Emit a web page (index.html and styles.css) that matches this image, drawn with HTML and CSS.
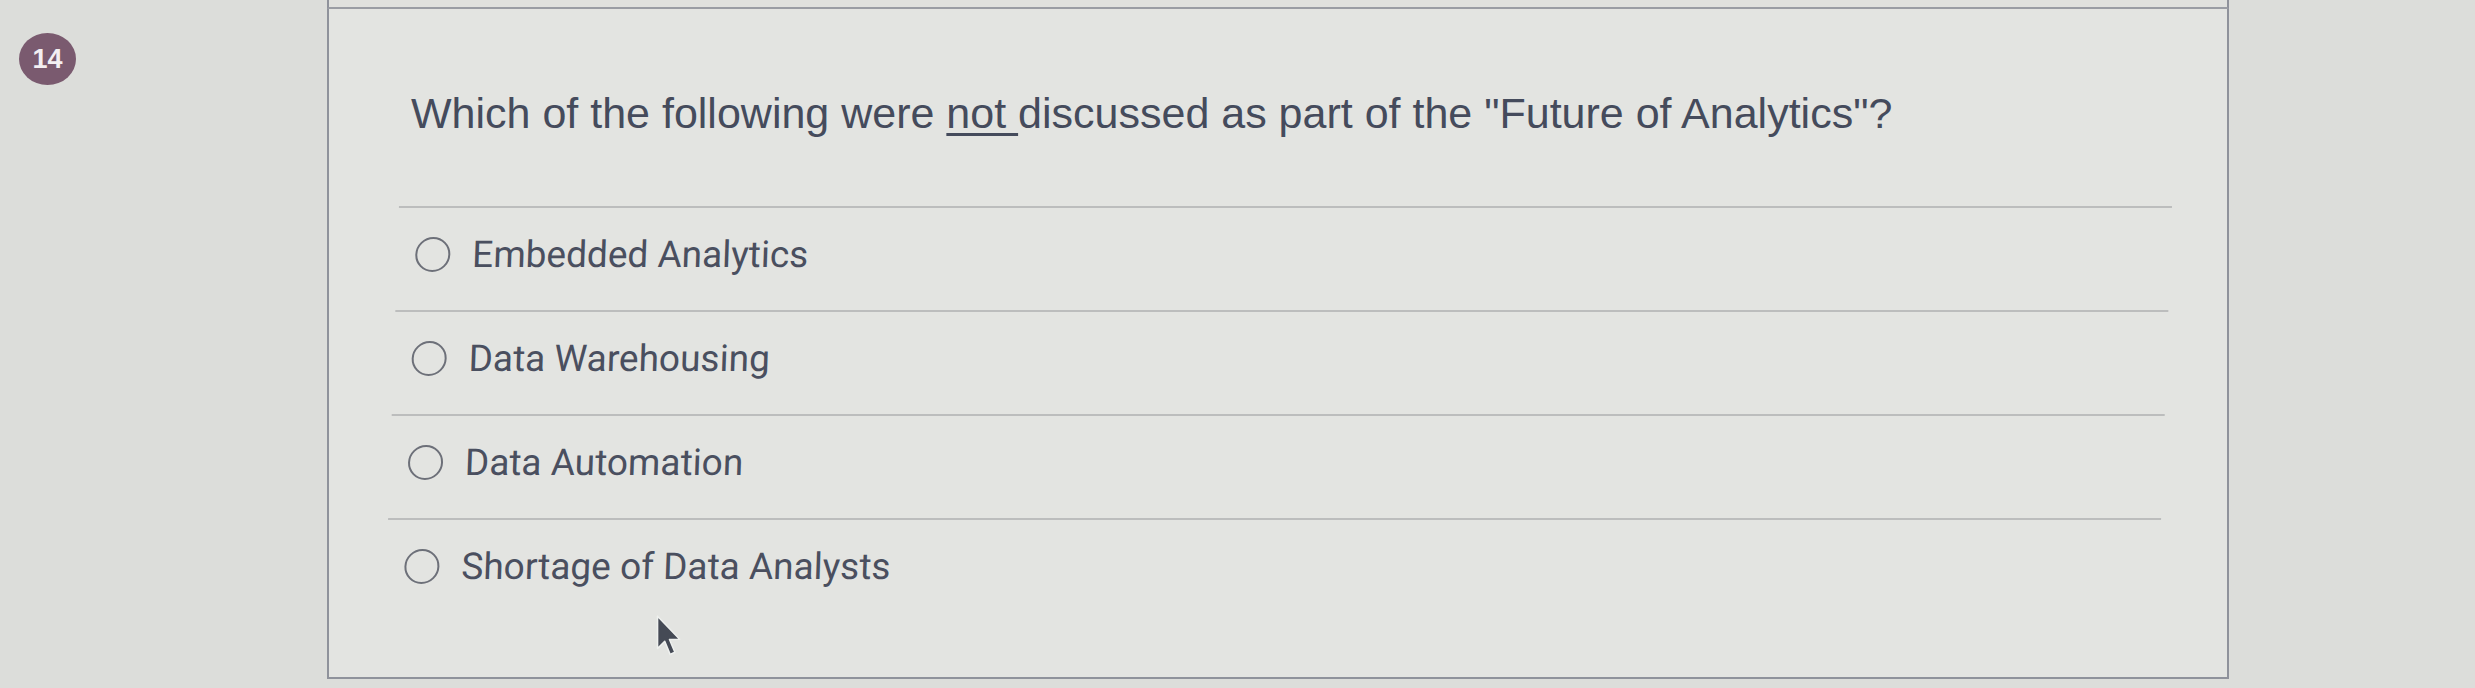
FILE: index.html
```html
<!DOCTYPE html>
<html lang="en">
<head>
<meta charset="utf-8">
<title>Question 14</title>
<link rel="stylesheet" href="styles.css">
</head>
<body>
<div class="page">
  <div class="gutter">
    <div class="badge">14</div>
  </div>
  <div class="column">
    <div class="prev-edge"></div>
    <section class="card">
      <p class="question">Which of the following were <u>not </u>discussed as part of the "Future of Analytics"?</p>
      <ul class="options">
        <li class="option"><span class="radio"></span><span class="label">Embedded Analytics</span></li>
        <li class="option"><span class="radio"></span><span class="label">Data Warehousing</span></li>
        <li class="option"><span class="radio"></span><span class="label">Data Automation</span></li>
        <li class="option"><span class="radio"></span><span class="label">Shortage of Data Analysts</span></li>
      </ul>
      <svg class="cursor" width="29" height="43" viewBox="0 0 24 36" aria-hidden="true">
        <path d="M2 1 L2 28 L8 22 L12.5 33 L16.5 31.2 L12 20.5 L20.5 20.3 Z" fill="#454a55" stroke="#eef0ee" stroke-width="1.3" stroke-linejoin="round"/>
      </svg>
    </section>
  </div>
</div>
</body>
</html>
```

FILE: styles.css
```css
html, body {
  margin: 0;
  padding: 0;
}
body {
  width: 2475px;
  height: 688px;
  overflow: hidden;
  background: #dcddda;
  font-family: "Liberation Sans", Arial, sans-serif;
}
.page {
  display: flex;
  height: 688px;
}
.gutter {
  width: 327px;
  flex: none;
}
.badge {
  margin: 33px 0 0 19px;
  width: 57px;
  height: 52px;
  border-radius: 50%;
  background: #7a5a6f;
  color: #f3eff2;
  font-weight: bold;
  font-size: 27px;
  display: flex;
  align-items: center;
  justify-content: center;
}
.column {
  width: 1902px;
  flex: none;
  display: flex;
  flex-direction: column;
}
.prev-edge {
  height: 7px;
  border-left: 2px solid #8f929b;
  border-right: 2px solid #8f929b;
  border-bottom: 2px solid #9a9da4;
  background: #e0e1de;
}
.card {
  position: relative;
  height: 670px;
  box-sizing: border-box;
  border-left: 2px solid #8f929b;
  border-right: 2px solid #8f929b;
  border-bottom: 2px solid #8f929b;
  background: #e3e4e1;
  padding: 80px 55px 0 70px;
}
.question {
  margin: 0 0 69px 12px;
  font-size: 43px;
  line-height: 48px;
  color: #454b5c;
}
.question u {
  text-decoration-thickness: 3px;
  text-underline-offset: 5px;
}
.options {
  list-style: none;
  margin: 0;
  padding: 0;
  transform: skewX(-2deg);
  transform-origin: top left;
}
.option {
  display: flex;
  align-items: center;
  gap: 22px;
  height: 104px;
  box-sizing: border-box;
  padding: 0 0 10px 18px;
  border-top: 2px solid #bcbdbd;
}
.radio {
  width: 31px;
  height: 31px;
  border: 2.5px solid #6d7079;
  border-radius: 50%;
  flex: none;
}
.label {
  font-family: Roboto, "Liberation Sans", sans-serif;
  font-size: 37px;
  color: #4a4f5f;
}
.cursor {
  position: absolute;
  left: 326px;
  top: 606px;
}
```
